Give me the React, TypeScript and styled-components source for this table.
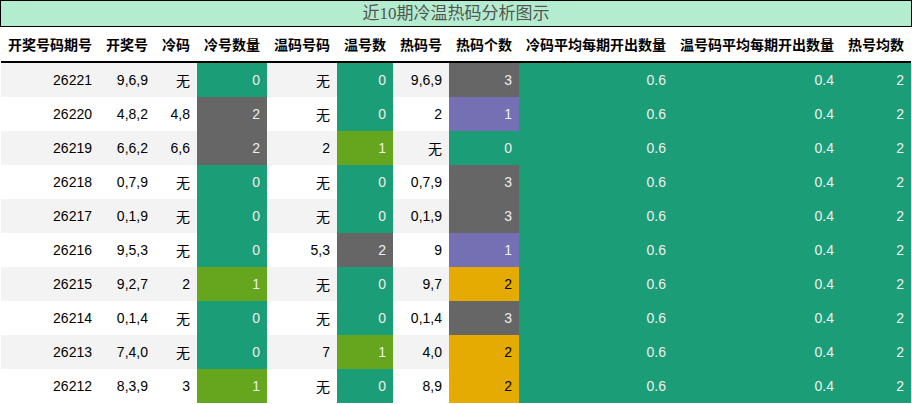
import React from "react";
import styled, { createGlobalStyle } from "styled-components";

const GlobalStyle = createGlobalStyle`
  body {
    margin: 0;
    background: #fff;
    font-family: "Liberation Sans", "Noto Sans CJK SC", sans-serif;
  }
`;

// palette (Dark2)
const GREEN = "#1b9e77";
const LIME = "#66a61e";
const GRAY = "#666666";
const PURPLE = "#7570b3";
const GOLD = "#e6ab02";

const Page = styled.div`
  width: 912px;
`;

const Title = styled.div`
  height: 25px;
  border: 1px solid #000;
  background: #b3ecce;
  color: #555;
  font-family: "Liberation Serif", "Noto Sans CJK SC", serif;
  font-size: 17px;
  line-height: 25px;
  text-align: center;
`;

const Table = styled.table`
  margin-left: 1px;
  width: 910px;
  table-layout: fixed;
  border-collapse: collapse;
  font-size: 14px;
`;

const HeadCell = styled.th`
  height: 34px;
  padding: 0 7px;
  text-align: right;
  font-weight: bold;
  color: #000;
  white-space: nowrap;
  border-bottom: 2px solid #000;
`;

const Row = styled.tr<{ $alt: boolean }>`
  background: ${(p) => (p.$alt ? "#f3f3f3" : "#fff")};
`;

const Cell = styled.td<{ $bg?: string; $fg?: string }>`
  height: 34px;
  padding: 0 7px;
  text-align: right;
  white-space: nowrap;
  background: ${(p) => p.$bg || "transparent"};
  color: ${(p) => p.$fg || "#000"};
`;

const widths = [98, 56, 42, 70, 70, 56, 56, 70, 154, 168, 70];

const headers = [
  "开奖号码期号",
  "开奖号",
  "冷码",
  "冷号数量",
  "温码号码",
  "温号数",
  "热码号",
  "热码个数",
  "冷码平均每期开出数量",
  "温号码平均每期开出数量",
  "热号均数",
];

type Draw = [string, string, string, number, string, number, string, number];

const draws: Draw[] = [
  ["26221", "9,6,9", "无", 0, "无", 0, "9,6,9", 3],
  ["26220", "4,8,2", "4,8", 2, "无", 0, "2", 1],
  ["26219", "6,6,2", "6,6", 2, "2", 1, "无", 0],
  ["26218", "0,7,9", "无", 0, "无", 0, "0,7,9", 3],
  ["26217", "0,1,9", "无", 0, "无", 0, "0,1,9", 3],
  ["26216", "9,5,3", "无", 0, "5,3", 2, "9", 1],
  ["26215", "9,2,7", "2", 1, "无", 0, "9,7", 2],
  ["26214", "0,1,4", "无", 0, "无", 0, "0,1,4", 3],
  ["26213", "7,4,0", "无", 0, "7", 1, "4,0", 2],
  ["26212", "8,3,9", "3", 1, "无", 0, "8,9", 2],
];

const countScale: Record<number, string> = { 0: GREEN, 1: LIME, 2: GRAY };
const hotScale: Record<number, string> = { 0: GREEN, 1: PURPLE, 2: GOLD, 3: GRAY };

const LIGHT = "#eeeeee";
const textOn = (bg: string) => (bg === GOLD ? "#000" : LIGHT);

const Count = ({ value, bg }: { value: number; bg: string }) => (
  <Cell $bg={bg} $fg={textOn(bg)}>
    {value}
  </Cell>
);

export default function App() {
  return (
    <Page>
      <GlobalStyle />
      <Title>近10期冷温热码分析图示</Title>
      <Table>
        <colgroup>
          {widths.map((w, i) => (
            <col key={i} style={{ width: w }} />
          ))}
        </colgroup>
        <thead>
          <tr>
            {headers.map((h) => (
              <HeadCell key={h}>{h}</HeadCell>
            ))}
          </tr>
        </thead>
        <tbody>
          {draws.map((d, i) => (
            <Row key={d[0]} $alt={i % 2 === 0}>
              <Cell>{d[0]}</Cell>
              <Cell>{d[1]}</Cell>
              <Cell>{d[2]}</Cell>
              <Count value={d[3]} bg={countScale[d[3]]} />
              <Cell>{d[4]}</Cell>
              <Count value={d[5]} bg={countScale[d[5]]} />
              <Cell>{d[6]}</Cell>
              <Count value={d[7]} bg={hotScale[d[7]]} />
              <Cell $bg={GREEN} $fg={LIGHT}>0.6</Cell>
              <Cell $bg={GREEN} $fg={LIGHT}>0.4</Cell>
              <Cell $bg={GREEN} $fg={LIGHT}>2</Cell>
            </Row>
          ))}
        </tbody>
      </Table>
    </Page>
  );
}
